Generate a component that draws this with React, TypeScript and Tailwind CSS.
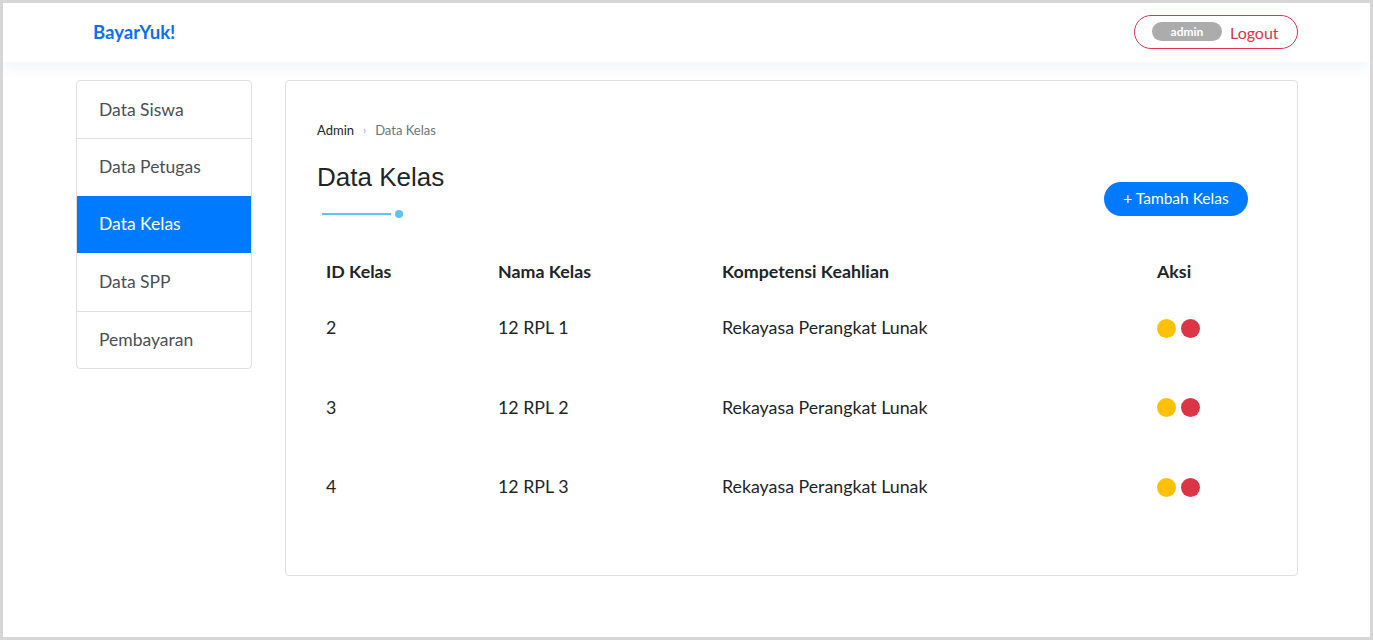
import React from 'react';

const menu = ['Data Siswa', 'Data Petugas', 'Data Kelas', 'Data SPP', 'Pembayaran'];

const rows = [
  { id: '2', nama: '12 RPL 1', kompetensi: 'Rekayasa Perangkat Lunak' },
  { id: '3', nama: '12 RPL 2', kompetensi: 'Rekayasa Perangkat Lunak' },
  { id: '4', nama: '12 RPL 3', kompetensi: 'Rekayasa Perangkat Lunak' },
];

export default function App() {
  return (
    <div className="h-[640px] w-full border-[3px] border-[#d6d6d6] bg-white font-['Lato','Open_Sans',sans-serif] overflow-hidden">
      {/* navbar */}
      <header className="h-[59px] bg-white shadow-[0_6px_14px_rgba(40,70,100,0.06)] relative z-10">
        <div className="h-full pl-[73px] pr-[72px] flex items-center justify-between">
          <span className="pl-[17px] text-[18.6px] font-bold text-[#0d6efd]">BayarYuk!</span>
          <div className="h-[34px] w-[164px] mt-[-2px] rounded-full border border-[#dc3545] flex items-center pl-[17px] gap-[8px]">
            <span className="h-[19px] w-[70px] rounded-full bg-[#acacac] text-white text-[12px] font-bold flex items-center justify-center leading-none">
              admin
            </span>
            <span className="text-[16px] text-[#dc3545] leading-none pt-[2px]">Logout</span>
          </div>
        </div>
      </header>

      <main className="pt-[18px] pl-[73px] pr-[72px] flex gap-[33px] items-start">
        {/* sidebar */}
        <nav className="w-[176px] shrink-0 rounded-[4px] border border-[#dfdfdf] overflow-hidden">
          {menu.map((m, i) => (
            <div
              key={m}
              className={
                (m === 'Data Kelas'
                  ? 'bg-[#007bff] text-white'
                  : 'text-[#495057]') +
                (i > 0 && m !== 'Data Kelas' && menu[i - 1] !== 'Data Kelas' ? ' border-t border-[#dfdfdf]' : '') +
                ' h-[57.4px] flex items-center pl-[22px] text-[17.5px]'
              }
            >
              {m}
            </div>
          ))}
        </nav>

        {/* content card */}
        <section className="flex-1 h-[496px] rounded-[4px] border border-[#dfdfdf] pl-[31px] pr-[49px] pt-[39px]">
          <div className="flex items-center gap-[9px] text-[13px] leading-[20px]">
            <span className="text-[#212529]">Admin</span>
            <span className="text-[#a0a6ad] text-[11px]">›</span>
            <span className="text-[#6c757d]">Data Kelas</span>
          </div>

          <div className="mt-[21px] flex items-end justify-between">
            <div>
              <h1 className="font-['Liberation_Sans',Arial,sans-serif] text-[26px] leading-[32px] text-[#212529]">
                Data Kelas
              </h1>
              <div className="mt-[17px] ml-[5px] flex items-center gap-[4px]">
                <div className="h-[2px] w-[69px] bg-[#62c3f0]" />
                <div className="h-[8px] w-[8px] rounded-full bg-[#62c3f0]" />
              </div>
            </div>
            <button className="h-[34px] w-[144px] rounded-full bg-[#007bff] text-white text-[15.5px] flex items-center justify-center mb-[2px]">
              + Tambah Kelas
            </button>
          </div>

          <div className="mt-[30px] pl-[9px]">
            <div className="grid grid-cols-[172px_224px_435px_1fr] h-[46px] items-center text-[17.8px] font-bold text-[#212529]">
              <span>ID Kelas</span>
              <span>Nama Kelas</span>
              <span>Kompetensi Keahlian</span>
              <span>Aksi</span>
            </div>
            {rows.map((r) => (
              <div
                key={r.id}
                className="grid grid-cols-[172px_224px_435px_1fr] h-[79.5px] items-start pt-[21px] text-[17.8px] leading-[24px] text-[#212529]"
              >
                <span>{r.id}</span>
                <span>{r.nama}</span>
                <span>{r.kompetensi}</span>
                <span className="flex items-center gap-[5px] h-[24px] pt-[2px]">
                  <span className="h-[19px] w-[19px] rounded-full bg-[#ffc107]" />
                  <span className="h-[19px] w-[19px] rounded-full bg-[#dc3545]" />
                </span>
              </div>
            ))}
          </div>
        </section>
      </main>
    </div>
  );
}
